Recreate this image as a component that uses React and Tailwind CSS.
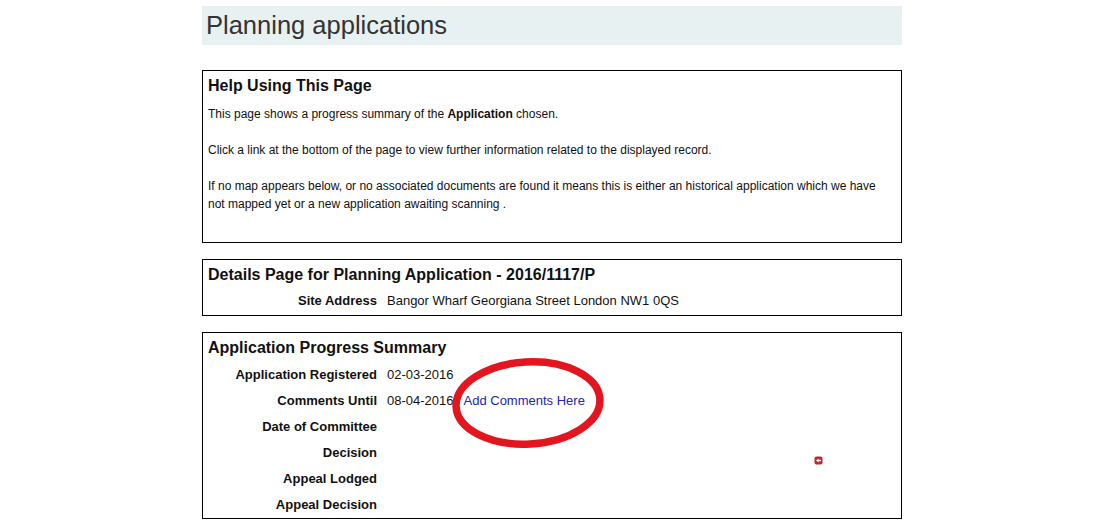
import React from "react";

const rows = [
  ["Application Registered", "02-03-2016"],
  ["Comments Until", "08-04-2016", true],
  ["Date of Committee", ""],
  ["Decision", ""],
  ["Appeal Lodged", ""],
  ["Appeal Decision", ""],
];

function Row({ label, value, link }) {
  return (
    <div className="flex h-[26px] items-center text-[13px] text-[#111]">
      <div className="w-[174px] text-right font-bold">{label}</div>
      <div className="ml-[10px]">{value}</div>
      {link && (
        <a className="ml-[10px] text-[#2424ad]" href="#">
          Add Comments Here
        </a>
      )}
    </div>
  );
}

export default function App() {
  return (
    <div
      className="min-h-[530px] w-[1120px] bg-white"
      style={{ fontFamily: '"Liberation Sans", Arial, sans-serif' }}
    >
      <div className="ml-[202px] w-[700px] pt-[6px]">
        <div className="flex h-[39px] items-center bg-[#e8f1f1] pl-[4px]">
          <h1 className="text-[25.5px] leading-none text-[#333]">Planning applications</h1>
        </div>

        <div className="mt-[25px] h-[173px] border border-black pl-[5px] pt-[4px]">
          <h2 className="h-[22px] text-[16px] leading-[22px] font-bold text-[#111]">
            Help Using This Page
          </h2>
          <div className="mt-[8px] text-[12px] leading-[18px] text-[#111]">
            <p className="mb-[18px]">
              This page shows a progress summary of the <b>Application</b> chosen.
            </p>
            <p className="mb-[18px]">
              Click a link at the bottom of the page to view further information related to the displayed record.
            </p>
            <p className="pr-[9px]">
              If no map appears below, or no associated documents are found it means this is either an historical application which we have not mapped yet or a new application awaiting scanning .
            </p>
          </div>
        </div>

        <div className="mt-[16px] h-[57px] border border-black pl-[5px] pt-[4px]">
          <h2 className="h-[22px] text-[16px] leading-[22px] font-bold text-[#111]">
            Details Page for Planning Application - 2016/1117/P
          </h2>
          <div className="-ml-[5px] mt-[2px]">
            <div className="flex h-[26px] items-center text-[13px] text-[#111]">
              <div className="w-[174px] text-right font-bold">Site Address</div>
              <div className="ml-[10px]">Bangor Wharf Georgiana Street London NW1 0QS</div>
            </div>
          </div>
        </div>

        <div className="relative mt-[16px] h-[187px] border border-black pl-[5px] pt-[4px]">
          <h2 className="h-[22px] text-[16px] leading-[22px] font-bold text-[#111]">
            Application Progress Summary
          </h2>
          <div className="-ml-[5px] mt-[3px]">
            {rows.map(([l, v, link]) => (
              <Row key={l} label={l} value={v} link={link} />
            ))}
          </div>

          <svg
            className="absolute left-[245px] top-[20px]"
            width="160"
            height="100"
            viewBox="0 0 160 100"
          >
            <ellipse
              cx="80"
              cy="50"
              rx="72"
              ry="41"
              fill="none"
              stroke="#e3161f"
              strokeWidth="7.5"
              transform="rotate(-3 80 50)"
            />
          </svg>

          <svg
            className="absolute left-[611px] top-[123px]"
            width="9"
            height="9"
            viewBox="0 0 9 9"
          >
            <rect x="0.5" y="0.5" width="8" height="8" rx="2" fill="#c3262c" />
            <path d="M2 4.5 L4.5 2.5 L4.5 3.7 L7 3.7 L7 5.3 L4.5 5.3 L4.5 6.5 Z" fill="#fff" />
          </svg>
        </div>
      </div>
    </div>
  );
}
